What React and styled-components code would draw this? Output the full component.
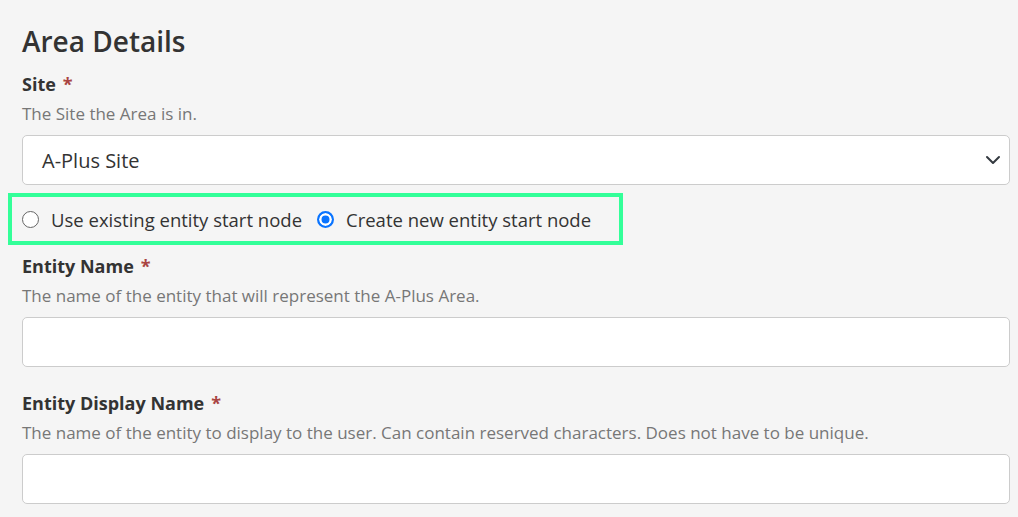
import React from 'react';
import styled, { createGlobalStyle } from 'styled-components';

const Global = createGlobalStyle`
  html, body {
    margin: 0;
    padding: 0;
    background: #f5f5f5;
  }
  body {
    font-family: "Segoe UI", "Open Sans", "Noto Sans", sans-serif;
    color: #333;
  }
`

const Page = styled.div`
  padding: 21px 8px 0 22px;
  width: 1018px;
  box-sizing: border-box;
`
const Title = styled.h2`
  margin: 0 0 11px;
  font-size: 28px;
  font-weight: 600;
  line-height: 40px;
  color: #333;
`
const Field = styled.div`
  display: flex;
  flex-direction: column;
  margin-bottom: ${props => props.gap || 0}px;
`
const Label = styled.label`
  font-size: 18px;
  font-weight: 700;
  line-height: 24px;
  color: #333;
`
const Required = styled.span`
  color: #a94442;
  margin-left: 7px;
`
const Help = styled.div`
  font-size: 17px;
  line-height: 22px;
  color: #777;
  margin: 7px 0 10px;
`
const Input = styled.input`
  height: 50px;
  box-sizing: border-box;
  border: 1px solid #ccc;
  border-radius: 5px;
  background: #fff;
  font: inherit;
  font-size: 20px;
  padding: 0 14px;
  width: 988px;
`
const SelectBox = styled.div`
  height: 50px;
  width: 988px;
  box-sizing: border-box;
  border: 1px solid #ccc;
  border-radius: 5px;
  background: #fff;
  display: flex;
  align-items: center;
  justify-content: space-between;
  padding: 0 8px 0 19px;
  font-size: 20px;
  color: #333;
`
const RadioGroup = styled.div`
  display: flex;
  align-items: center;
  gap: 15px;
  width: 615px;
  height: 52px;
  box-sizing: border-box;
  border: 4px solid #33ff99;
  margin: 8px 0 9px -14px;
  padding: 0 0 0 10px;
`
const RadioItem = styled.label`
  display: flex;
  align-items: center;
  gap: 12px;
  font-size: 18.5px;
  color: #333;
`
const RadioDot = styled.span`
  width: 17px;
  height: 17px;
  border-radius: 50%;
  box-sizing: border-box;
  flex: none;
  border: ${props => props.checked ? '2px solid #0a74ff' : '1px solid #666'};
  background: ${props => props.checked ? '#0a74ff' : '#fff'};
  box-shadow: ${props => props.checked ? 'inset 0 0 0 2.5px #fff' : 'none'};
`

const Chevron = () => (
  <svg width="16" height="16" viewBox="0 0 16 16">
    <path d="M2 5l6 6 6-6" fill="none" stroke="#343a40" strokeWidth="2" strokeLinecap="round" strokeLinejoin="round" />
  </svg>
)

export default function App() {
  return (
    <Page>
      <Global />
      <Title>Area Details</Title>
      <Field>
        <Label>Site<Required>*</Required></Label>
        <Help>The Site the Area is in.</Help>
        <SelectBox>
          <span>A-Plus Site</span>
          <Chevron />
        </SelectBox>
      </Field>
      <RadioGroup>
        <RadioItem><RadioDot />Use existing entity start node</RadioItem>
        <RadioItem><RadioDot checked />Create new entity start node</RadioItem>
      </RadioGroup>
      <Field gap={24}>
        <Label>Entity Name<Required>*</Required></Label>
        <Help>The name of the entity that will represent the A-Plus Area.</Help>
        <Input />
      </Field>
      <Field>
        <Label>Entity Display Name<Required>*</Required></Label>
        <Help>The name of the entity to display to the user. Can contain reserved characters. Does not have to be unique.</Help>
        <Input />
      </Field>
    </Page>
  );
}
